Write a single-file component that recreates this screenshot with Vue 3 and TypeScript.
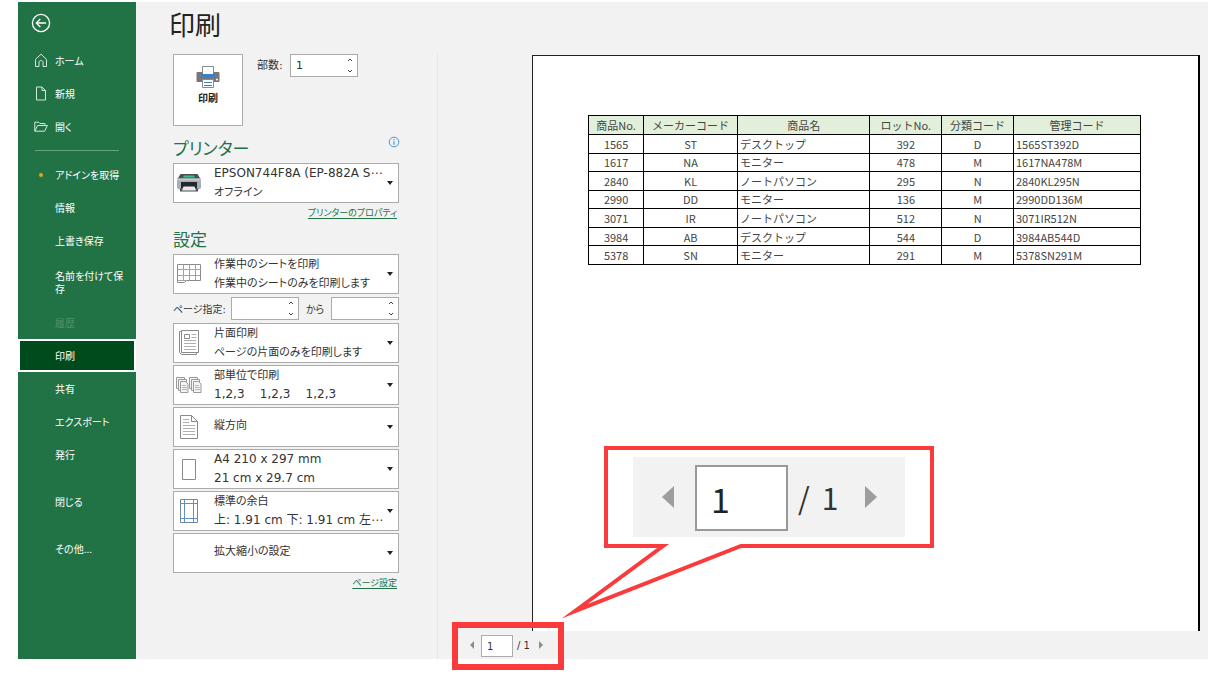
<script setup lang="ts">
import { ref } from 'vue'

interface NavItem {
  label: string
  icon?: 'home' | 'new' | 'open'
  kind?: 'featured' | 'tall' | 'disabled' | 'current' | 'apart'
}

interface Setting {
  icon: 'sheet' | 'single' | 'collate' | 'portrait' | 'paper' | 'margins' | 'none'
  lines: string[]
}

interface Product {
  no: string
  maker: string
  name: string
  lot: string
  category: string
  code: string
}

const topItems: NavItem[] = [
  { label: 'ホーム', icon: 'home' },
  { label: '新規', icon: 'new' },
  { label: '開く', icon: 'open' },
]

const fileItems: NavItem[] = [
  { label: 'アドインを取得', kind: 'featured' },
  { label: '情報' },
  { label: '上書き保存' },
  { label: '名前を付けて保存', kind: 'tall' },
  { label: '履歴', kind: 'disabled' },
  { label: '印刷', kind: 'current' },
  { label: '共有' },
  { label: 'エクスポート' },
  { label: '発行' },
  { label: '閉じる', kind: 'apart' },
  { label: 'その他...', kind: 'apart' },
]

const scopeLines = ['作業中のシートを印刷', '作業中のシートのみを印刷します']

const settings: Setting[] = [
  { icon: 'single', lines: ['片面印刷', 'ページの片面のみを印刷します'] },
  { icon: 'collate', lines: ['部単位で印刷', '1,2,3    1,2,3    1,2,3'] },
  { icon: 'portrait', lines: ['縦方向'] },
  { icon: 'paper', lines: ['A4 210 x 297 mm', '21 cm x 29.7 cm'] },
  { icon: 'margins', lines: ['標準の余白', '上: 1.91 cm 下: 1.91 cm 左⋯'] },
  { icon: 'none', lines: ['拡大縮小の設定'] },
]

const products: Product[] = [
  { no: '1565', maker: 'ST', name: 'デスクトップ', lot: '392', category: 'D', code: '1565ST392D' },
  { no: '1617', maker: 'NA', name: 'モニター', lot: '478', category: 'M', code: '1617NA478M' },
  { no: '2840', maker: 'KL', name: 'ノートパソコン', lot: '295', category: 'N', code: '2840KL295N' },
  { no: '2990', maker: 'DD', name: 'モニター', lot: '136', category: 'M', code: '2990DD136M' },
  { no: '3071', maker: 'IR', name: 'ノートパソコン', lot: '512', category: 'N', code: '3071IR512N' },
  { no: '3984', maker: 'AB', name: 'デスクトップ', lot: '544', category: 'D', code: '3984AB544D' },
  { no: '5378', maker: 'SN', name: 'モニター', lot: '291', category: 'M', code: '5378SN291M' },
]

const copies = ref('1')
const fromPage = ref('')
const toPage = ref('')
const page = ref('1')

const hasDigits = (text: string): boolean => /\d/.test(text)
</script>

<template>
  <div class="frame">
    <div class="backstage">
      <nav class="sidebar" aria-label="ファイル">
        <button class="back" type="button" aria-label="戻る">
          <svg width="20" height="20" viewBox="0 0 20 20" fill="none" stroke="#fff" stroke-width="1.3">
            <circle cx="10" cy="10" r="8.6" />
            <path d="M15 10H5.5M9.3 6L5.3 10l4 4" />
          </svg>
        </button>
        <button v-for="item in topItems" :key="item.label" class="nav-item" type="button">
          <span class="nav-icon">
            <svg v-if="item.icon === 'home'" width="14" height="15" viewBox="0 0 14 15">
              <path d="M1.5 6.4L7 1.2l5.500 5.200V13.500H9V9.200c0-1-.8-1.600-2-1.600s-2 .6-2 1.600v4.300H1.500z" />
            </svg>
            <svg v-else-if="item.icon === 'new'" width="14" height="15" viewBox="0 0 14 15">
              <path d="M2.500 1h5.500l3.500 3.500V14h-9zM8 1v3.500h3.500" />
            </svg>
            <svg v-else width="14" height="15" viewBox="0 0 14 15">
              <path d="M.8 12.200V3.200h3.800l1.200 1.300h5v2M.8 12.200l2.800-5.700h9.800l-2.800 5.700z" />
            </svg>
          </span>
          <span>{{ item.label }}</span>
        </button>
        <hr class="nav-rule" />
        <button
          v-for="item in fileItems"
          :key="item.label"
          class="nav-item"
          :class="item.kind"
          type="button"
          :disabled="item.kind === 'disabled'"
        >
          <span class="nav-icon"><i v-if="item.kind === 'featured'" class="dot"></i></span>
          <span>{{ item.label }}</span>
        </button>
      </nav>

      <main class="content">
        <h1>印刷</h1>
        <div class="columns">
          <section class="options">
            <div class="print-row">
              <button class="print-button" type="button">
                <svg width="24" height="22" viewBox="0 0 24 22">
                  <rect x="0.500" y="6" width="23" height="10" rx="1" fill="#777" />
                  <path d="M6.500 .5h11V8h-11z" fill="#fff" stroke="#8a8a8a" />
                  <rect x="5" y="7" width="14" height="4" fill="#3f7fc4" />
                  <path d="M7 6h10v2H7z" fill="#fff" />
                  <circle cx="21" cy="13.500" r="1" fill="#fff" />
                  <path d="M6.500 13.500h11v8h-11z" fill="#fff" stroke="#8a8a8a" />
                  <path d="M8 16.500h8M8 19.500h8" stroke="#3f7fc4" />
                </svg>
                <span>印刷</span>
              </button>
              <label class="copies-label" for="copies">部数:</label>
              <div class="spin">
                <input id="copies" v-model="copies" type="text" />
                <span class="steps">
                  <button type="button" aria-label="増やす"><svg width="6" height="4" viewBox="0 0 6 4"><path d="M1 3l2-2 2 2" /></svg></button>
                  <button type="button" aria-label="減らす"><svg width="6" height="4" viewBox="0 0 6 4"><path d="M1 1l2 2 2-2" /></svg></button>
                </span>
              </div>
            </div>

            <div class="heading-row">
              <h2>プリンター</h2>
              <button class="info" type="button" aria-label="プリンターの情報">
                <svg width="12" height="12" viewBox="0 0 12 12" fill="none" stroke="#4a97d6">
                  <circle cx="6" cy="6" r="4.800" />
                  <path d="M6 5.200v3.500M6 3v1.300" stroke-width="1.200" />
                </svg>
              </button>
            </div>
            <button class="choice" type="button" aria-haspopup="listbox">
              <span class="choice-icon">
                <svg width="26" height="20" viewBox="0 0 26 20">
                  <path d="M4.500 1h17l3 5H1.500z" fill="#4b4f54" />
                  <path d="M8 2.500h10l1 2H7z" fill="#35c08a" />
                  <path d="M1 5.500h24V15l-2 1.500H3L1 15z" fill="#a7aeb6" />
                  <path d="M1 5.500h24v2H1z" fill="#c3c9cf" />
                  <path d="M5 9h16v6.500H5z" fill="#24272b" />
                  <path d="M4 15.500h18v3H4z" fill="#4b4f54" />
                  <path d="M7.500 13.500h11l1.500 4H6z" fill="#e8eaed" />
                </svg>
              </span>
              <span class="choice-text">
                <span class="with-digits">EPSON744F8A (EP-882A S⋯</span>
                <span>オフライン</span>
              </span>
              <span class="caret"></span>
            </button>
            <p class="link-row"><a href="#printer">プリンターのプロパティ</a></p>

            <h2 class="settings-heading">設定</h2>
            <button class="choice" type="button" aria-haspopup="listbox">
              <span class="choice-icon">
                <svg width="26" height="22" viewBox="0 0 26 22" fill="none" stroke="#8a8a8a">
                  <path d="M1.500 1.500h23v16h-14l-2 2h-7z" />
                  <path d="M1.500 6.500h23M1.500 12.500h23M7.500 1.500v16M13.500 1.500v16M19.500 1.500v16M1.500 17.500h9" stroke="#a3a3a3" />
                </svg>
              </span>
              <span class="choice-text"><span v-for="line in scopeLines" :key="line">{{ line }}</span></span>
              <span class="caret"></span>
            </button>
            <div class="range-row">
              <label class="from-label" for="from-page">ページ指定:</label>
              <div class="spin">
                <input id="from-page" v-model="fromPage" type="text" />
                <span class="steps">
                  <button type="button" aria-label="増やす"><svg width="6" height="4" viewBox="0 0 6 4"><path d="M1 3l2-2 2 2" /></svg></button>
                  <button type="button" aria-label="減らす"><svg width="6" height="4" viewBox="0 0 6 4"><path d="M1 1l2 2 2-2" /></svg></button>
                </span>
              </div>
              <label class="to-label" for="to-page">から</label>
              <div class="spin">
                <input id="to-page" v-model="toPage" type="text" />
                <span class="steps">
                  <button type="button" aria-label="増やす"><svg width="6" height="4" viewBox="0 0 6 4"><path d="M1 3l2-2 2 2" /></svg></button>
                  <button type="button" aria-label="減らす"><svg width="6" height="4" viewBox="0 0 6 4"><path d="M1 1l2 2 2-2" /></svg></button>
                </span>
              </div>
            </div>
            <div class="choices">
              <button v-for="s in settings" :key="s.icon" class="choice" type="button" aria-haspopup="listbox">
                <span class="choice-icon">
                  <svg v-if="s.icon === 'single'" width="20" height="26" viewBox="0 0 20 26" fill="none" stroke="#8a8a8a">
                    <path d="M2.500 1.500H.500v21l2 2h15v-2M2.500 .5h17v22h-17z" />
                    <path d="M5.500 4.500h5v4h-5z" />
                    <path d="M12.500 4.500h5M12.500 7.500h5M5 10.500h12M5 13.500h12M5 16.500h12M5 19.500h12" stroke="#b0b0b0" />
                  </svg>
                  <svg v-else-if="s.icon === 'collate'" width="26" height="16" viewBox="0 0 26 16">
                    <g v-for="x in [0, 13]" :key="x" :transform="`translate(${x} 0)`" fill="#f4f4f4" stroke="#9a9a9a">
                      <path d="M.5 .5h8v11h-8z" />
                      <path d="M2.500 2.500h8v11h-8z" />
                      <path d="M4.500 4.500h5l2.500 2.500v8.500H4.500z" />
                      <path d="M6 8.500h4M6 10.500h5M6 12.500h5" stroke="#b5b5b5" />
                    </g>
                  </svg>
                  <svg v-else-if="s.icon === 'portrait'" width="18" height="24" viewBox="0 0 18 24" fill="none" stroke="#8a8a8a">
                    <path d="M.500 .500h11l6 6v17H.500zM11.500 .500v6h6" />
                    <path d="M3 4.500h6M3 7.500h6M3 10.500h12M3 13.500h12M3 16.500h12M3 19.500h12" stroke="#b0b0b0" />
                  </svg>
                  <svg v-else-if="s.icon === 'paper'" width="14" height="21" viewBox="0 0 14 21" fill="none" stroke="#8a8a8a">
                    <path d="M.500 .500h13v20H.500z" />
                  </svg>
                  <svg v-else-if="s.icon === 'margins'" width="18" height="24" viewBox="0 0 18 24" fill="none">
                    <path d="M.500 .500h17v23H.500z" stroke="#7a8594" />
                    <path d="M4.500 .500v23M13.500 .500v23M.500 4.500h17M.500 19.500h17" stroke="#5b8fd0" />
                  </svg>
                </span>
                <span class="choice-text" :class="{ single: s.lines.length === 1 }">
                  <span v-for="line in s.lines" :key="line" :class="{ 'with-digits': hasDigits(line) }">{{ line }}</span>
                </span>
                <span class="caret"></span>
              </button>
            </div>
            <p class="link-row"><a href="#page-setup">ページ設定</a></p>
          </section>

          <section class="preview" aria-label="プレビュー">
            <div class="sheet">
              <table>
                <colgroup>
                  <col class="c-no" /><col class="c-maker" /><col class="c-name" />
                  <col class="c-lot" /><col class="c-category" /><col />
                </colgroup>
                <thead>
                  <tr>
                    <th>商品No.</th><th>メーカーコード</th><th>商品名</th>
                    <th>ロットNo.</th><th>分類コード</th><th>管理コード</th>
                  </tr>
                </thead>
                <tbody>
                  <tr v-for="p in products" :key="p.no">
                    <td>{{ p.no }}</td>
                    <td>{{ p.maker }}</td>
                    <td class="start">{{ p.name }}</td>
                    <td>{{ p.lot }}</td>
                    <td>{{ p.category }}</td>
                    <td class="start">{{ p.code }}</td>
                  </tr>
                </tbody>
              </table>

              <aside class="callout">
                <svg class="callout-shape" width="376" height="176" viewBox="0 0 376 176">
                  <path
                    d="M46 2H372V100H181L15 165L103 100H46z"
                    fill="#fff" stroke="#fb3b3b" stroke-width="4" stroke-miterlimit="20"
                  />
                </svg>
                <div class="zoomed">
                  <svg width="12" height="22" viewBox="0 0 12 22"><path d="M12 0v22L0 11z" fill="#9d9d9d" /></svg>
                  <input v-model="page" type="text" aria-label="現在のページ (拡大)" />
                  <span class="zoomed-total"><span>/</span><span>1</span></span>
                  <svg width="12" height="22" viewBox="0 0 12 22"><path d="M0 0v22l12-11z" fill="#9d9d9d" /></svg>
                </div>
              </aside>
            </div>
            <div class="pager">
              <button type="button" aria-label="前のページ"><svg width="4" height="8" viewBox="0 0 4 8"><path d="M4 0v8L0 4z" fill="#8c8c8c" /></svg></button>
              <input v-model="page" type="text" aria-label="現在のページ" />
              <span class="total">/ 1</span>
              <button type="button" aria-label="次のページ"><svg width="4" height="8" viewBox="0 0 4 8"><path d="M0 0v8l4-4z" fill="#8c8c8c" /></svg></button>
              <span class="marker"></span>
            </div>
          </section>
        </div>
      </main>
    </div>
  </div>
</template>

<style>
body {
  margin: 0;
  background: #fff;
}
</style>

<style scoped>
.frame {
  display: flex;
  box-sizing: border-box;
  min-height: 100vh;
  padding: 2px 20px 15px 18px;
  background: #fff;
}

.backstage {
  display: flex;
  flex: 1;
  min-width: 0;
  background: #f2f2f2;
  color: #333;
  font-family: "DejaVu Sans", "Noto Sans CJK JP", sans-serif;
  font-size: 11px;
  font-feature-settings: "palt";
}

button,
input {
  box-sizing: border-box;
  margin: 0;
  padding: 0;
  border: 0;
  border-radius: 0;
  background: none;
  color: inherit;
  font: inherit;
  font-feature-settings: inherit;
}

svg {
  display: block;
}

/* Sidebar */
.sidebar {
  display: flex;
  flex: none;
  flex-direction: column;
  width: 118px;
  background: #217346;
  color: #fff;
  font-family: "Noto Sans CJK JP", sans-serif;
  font-size: 10px;
  line-height: 13px;
}

.back {
  align-self: flex-start;
  margin: 11px 0 11px 13px;
}

.nav-item {
  display: flex;
  align-items: center;
  min-height: 33px;
  padding-right: 10px;
  text-align: left;
}

.nav-icon {
  display: flex;
  flex: none;
  justify-content: center;
  width: 14px;
  margin: 0 7px 0 16px;
}

.nav-icon path {
  fill: none;
  stroke: #d6e8dd;
}

.dot {
  width: 4px;
  height: 4px;
  border-radius: 50%;
  background: #e8a317;
}

.nav-rule {
  width: 84px;
  height: 1px;
  margin: 7px 0 7px 17px;
  border: 0;
  background: #63a37f;
}

.tall {
  min-height: 49px;
}

.disabled {
  color: #4f9170;
}

.current {
  border: 2px solid #fff;
  background: #004b1c;
}

.current .nav-icon {
  margin-left: 14px;
}

.apart {
  margin-top: 14px;
}

/* Print options */
.content {
  display: flex;
  flex: 1;
  flex-direction: column;
  min-width: 0;
}

h1,
h2,
p {
  margin: 0;
  font-weight: normal;
}

h1 {
  padding: 5px 33px 9px;
  color: #222;
  font-size: 26px;
  line-height: 38px;
}

.columns {
  display: flex;
  flex: 1;
}

.options {
  flex: none;
  width: 226px;
  padding: 0 38px 0 37px;
  border-right: 1px solid #e6e6e6;
}

.print-row {
  display: flex;
  align-items: flex-start;
}

.print-button {
  display: flex;
  flex-direction: column;
  align-items: center;
  gap: 5px;
  width: 70px;
  height: 72px;
  padding-top: 11px;
  border: 1px solid #ababab;
  background: #fff;
  color: #222;
  font-size: 10px;
  font-weight: bold;
  line-height: 12px;
}

.copies-label {
  width: 33px;
  margin-left: 14px;
  line-height: 24px;
}

.spin {
  display: flex;
  box-sizing: border-box;
  flex: none;
  width: 68px;
  height: 23px;
  border: 1px solid #ababab;
  background: #fff;
}

.spin input {
  flex: 1;
  min-width: 0;
  padding-left: 5px;
}

.steps {
  display: flex;
  flex-direction: column;
  justify-content: space-between;
  padding: 3px 4px;
}

.steps path {
  fill: none;
  stroke: #444;
}

.heading-row {
  display: flex;
  align-items: flex-start;
  justify-content: space-between;
  margin-top: 10px;
}

h2 {
  color: #217346;
  font-size: 17px;
  line-height: 27px;
}

.settings-heading {
  margin-top: 3px;
}

.info {
  margin-right: -1px;
}

.choice {
  display: flex;
  align-items: center;
  width: 100%;
  height: 40px;
  border: 1px solid #ababab;
  background: #fff;
  text-align: left;
  white-space: pre;
}

.choice-icon {
  display: flex;
  flex: none;
  justify-content: center;
  width: 30px;
  margin-right: 10px;
}

.choice-text {
  display: flex;
  flex: 1;
  flex-direction: column;
  min-width: 0;
  line-height: 19px;
}

.with-digits {
  font-size: 12px;
}

.single {
  padding-bottom: 3px;
}

.caret {
  width: 0;
  margin-right: 5px;
  border: 3px solid transparent;
  border-top: 4px solid #222;
  border-bottom: 0;
}

.choices {
  display: flex;
  flex-direction: column;
  gap: 2px;
}

.link-row {
  padding-right: 2px;
  font-size: 9px;
  line-height: 21px;
  text-align: right;
}

.link-row a {
  color: #217346;
  text-underline-offset: 2px;
}

.range-row {
  display: flex;
  align-items: center;
  margin: 3px 0;
  font-size: 10px;
}

.from-label {
  width: 58px;
}

.to-label {
  flex: 1;
  text-align: center;
}

/* Preview */
.preview {
  display: flex;
  flex: 1;
  flex-direction: column;
  min-width: 0;
}

.sheet {
  position: relative;
  flex: 1;
  margin: 1px 8px 0 94px;
  padding: 59px 57px 0 55px;
  border: 1px solid #222;
  border-right: 2px solid #000;
  border-bottom: 0;
  background: #fff;
}

table {
  width: 100%;
  height: 150px;
  border-collapse: collapse;
  table-layout: fixed;
  border: 1px solid #000;
  color: #444;
  font-family: "Noto Sans CJK JP", sans-serif;
  font-size: 11px;
  font-feature-settings: normal;
  line-height: 14px;
}

th,
td {
  padding: 0;
  border: 1px solid #000;
  font-weight: normal;
  text-align: center;
  white-space: nowrap;
}

th {
  height: 18px;
  background: #e2efda;
}

.start {
  padding-left: 2px;
  text-align: left;
}

.c-no {
  width: 10%;
}

.c-maker {
  width: 17%;
}

.c-name {
  width: 24%;
}

.c-lot,
.c-category {
  width: 13%;
}

.pager {
  position: relative;
  display: flex;
  align-items: center;
  height: 28px;
  padding-left: 32px;
  font-size: 10px;
}

.pager input {
  width: 32px;
  height: 22px;
  margin: 2px 4px 0 7px;
  padding-left: 5px;
  border: 1px solid #ababab;
  background: #fff;
}

.total {
  margin-right: 9px;
}

.marker {
  position: absolute;
  top: -9px;
  left: 14px;
  box-sizing: border-box;
  width: 112px;
  height: 48px;
  border: 6px solid #fb3b3b;
  pointer-events: none;
}

.callout {
  position: absolute;
  top: 390px;
  left: 27px;
}

.zoomed {
  position: absolute;
  top: 11px;
  left: 73px;
  display: flex;
  box-sizing: border-box;
  align-items: center;
  width: 272px;
  height: 80px;
  padding: 0 28px 0 29px;
  background: #f2f2f2;
  font-family: "Noto Sans CJK JP", sans-serif;
}

.zoomed input {
  width: 93px;
  height: 66px;
  margin: 2px 10px 0 21px;
  padding-left: 14px;
  border: 2px solid #999;
  background: #fff;
  color: #222;
  font-size: 34px;
}

.zoomed-total {
  display: flex;
  flex: 1;
  gap: 12px;
  font-size: 30px;
}
</style>
